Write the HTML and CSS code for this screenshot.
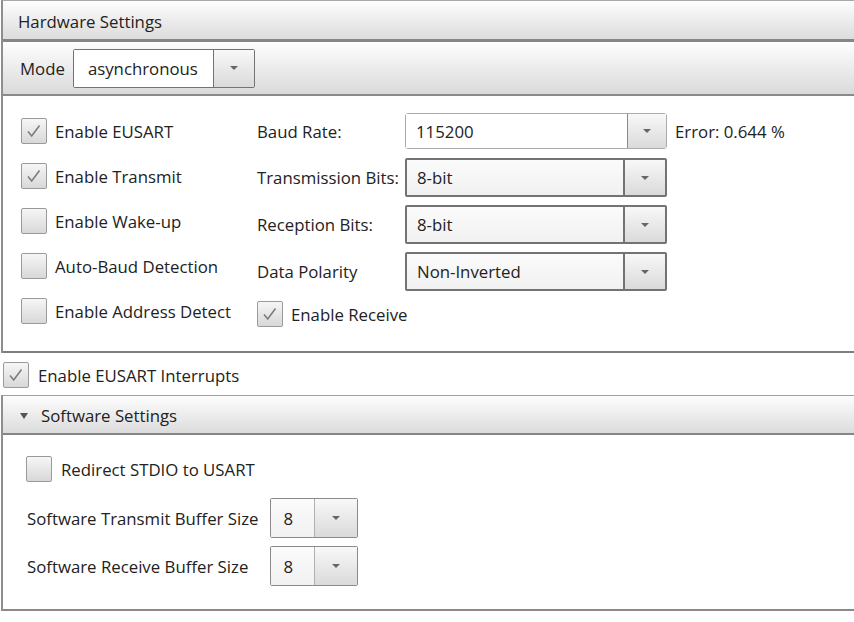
FILE: index.html
```html
<!DOCTYPE html>
<html>
<head>
<meta charset="utf-8">
<link rel="stylesheet" href="styles.css">
</head>
<body>
<section class="panel hw">
  <div class="panel-head">Hardware Settings</div>
  <div class="toolbar">
    <span>Mode</span>
    <div class="combo mode"><span class="val">asynchronous</span><span class="btn"></span></div>
  </div>
  <div class="hw-body">
    <div class="opts">
      <label class="check"><span class="box on"><svg viewBox="0 0 26 26"><polyline points="6.5,13.5 10.5,18.5 19,7"/></svg></span>Enable EUSART</label>
      <label class="check"><span class="box on"><svg viewBox="0 0 26 26"><polyline points="6.5,13.5 10.5,18.5 19,7"/></svg></span>Enable Transmit</label>
      <label class="check"><span class="box"></span>Enable Wake-up</label>
      <label class="check"><span class="box"></span>Auto-Baud Detection</label>
      <label class="check"><span class="box"></span>Enable Address Detect</label>
    </div>
    <div class="fields">
      <span class="lbl">Baud Rate:</span>
      <div class="combo edit"><span class="val">115200</span><span class="btn"></span></div>
      <span class="err">Error: 0.644 %</span>

      <span class="lbl">Transmission Bits:</span>
      <div class="combo sel"><span class="val">8-bit</span><span class="btn"></span></div>
      <span></span>

      <span class="lbl">Reception Bits:</span>
      <div class="combo sel"><span class="val">8-bit</span><span class="btn"></span></div>
      <span></span>

      <span class="lbl">Data Polarity</span>
      <div class="combo sel"><span class="val">Non-Inverted</span><span class="btn"></span></div>
      <span></span>

      <label class="check recv"><span class="box on"><svg viewBox="0 0 26 26"><polyline points="6.5,13.5 10.5,18.5 19,7"/></svg></span>Enable Receive</label>
    </div>
  </div>
</section>

<label class="check interrupts"><span class="box on"><svg viewBox="0 0 26 26"><polyline points="6.5,13.5 10.5,18.5 19,7"/></svg></span>Enable EUSART Interrupts</label>

<section class="panel sw">
  <div class="panel-head sw-head"><span class="tri"></span>Software Settings</div>
  <div class="sw-body">
    <label class="check redirect"><span class="box"></span>Redirect STDIO to USART</label>
    <div class="buffers">
      <span>Software Transmit Buffer Size</span>
      <div class="combo small"><span class="val">8</span><span class="btn"></span></div>
      <span>Software Receive Buffer Size</span>
      <div class="combo small"><span class="val">8</span><span class="btn"></span></div>
    </div>
  </div>
</section>
</body>
</html>
```
FILE: styles.css
```css
html, body {
  margin: 0;
  overflow: hidden;
  background: #ffffff;
}
body {
  width: 854px;
  height: 622px;
  box-sizing: border-box;
  padding-left: 1px;
  font-family: "Open Sans", "Noto Sans", sans-serif;
  font-size: 16.8px;
  color: #222222;
}

.panel {
  border-left: 2px solid #8e8e8e;
}
.hw {
  border-top: 1px solid #a8a8a8;
}
.panel-head {
  box-sizing: border-box;
  display: flex;
  align-items: center;
  padding-left: 15px;
  padding-top: 2px;
  background: linear-gradient(#fdfdfd, #dcdcdc);
  border-bottom: 3px solid #868686;
  height: 41px;
}
.toolbar {
  height: 54px;
  box-sizing: border-box;
  display: flex;
  align-items: center;
  gap: 8px;
  padding-left: 17px;
  background: linear-gradient(#fefefe, #dadada);
  border-bottom: 2px solid #8a8a8a;
}

.hw-body {
  display: flex;
  align-items: flex-start;
  padding: 12px 0 18px 18px;
  border-bottom: 2px solid #7e7e7e;
}
.opts {
  width: 236px;
  flex: none;
  display: flex;
  flex-direction: column;
  gap: 19px;
  padding-top: 10px;
}
.fields {
  display: grid;
  grid-template-columns: 148px 262px auto;
  grid-template-rows: 46px 47px 47px 47px 38px;
  align-items: center;
}
.err {
  margin-left: 8px;
}
.recv {
  grid-column: 1 / 3;
}

.check {
  display: flex;
  align-items: center;
  gap: 8px;
}
.box {
  width: 26px;
  height: 26px;
  box-sizing: border-box;
  border: 1px solid #9a9a9a;
  border-radius: 2px;
  background: linear-gradient(#f6f6f6, #d8d8d8);
  flex: none;
}
.box svg {
  display: block;
  width: 24px;
  height: 24px;
}
.box polyline {
  fill: none;
  stroke: #7c7c7c;
  stroke-width: 1.7;
}

.combo {
  display: flex;
  box-sizing: border-box;
  height: 39px;
  border: 1px solid #737373;
  border-radius: 2px;
}
.combo .val {
  flex: 1;
  display: flex;
  align-items: center;
  padding-left: 10px;
  background: linear-gradient(#fbfbfb, #f1f1f1);
}
.combo .btn {
  width: 40px;
  flex: none;
  display: flex;
  align-items: center;
  justify-content: center;
  border-left: 1px solid #737373;
  background: linear-gradient(#f8f8f8, #dadada);
}
.combo .btn::after {
  content: "";
  border-left: 4px solid transparent;
  border-right: 4px solid transparent;
  border-top: 4px solid #666666;
}
.combo.mode {
  width: 182px;
}
.combo.mode .val {
  background: #ffffff;
  padding-left: 14px;
}
.combo.edit {
  height: 36px;
  border-color: #ababab;
  border-radius: 3px;
}
.combo.edit .val {
  background: #ffffff;
}
.combo.edit .btn {
  width: 38px;
  border-left-color: #8a8a8a;
}
.combo.sel {
  border-width: 2px;
}
.combo.sel .btn {
  border-left-width: 2px;
}
.combo.small {
  width: 88px;
  height: 40px;
  border-color: #8a8a8a;
}
.combo.small .val {
  padding-left: 13px;
}
.combo.small .btn {
  width: 42px;
  border-left-color: #b0b0b0;
}

.interrupts {
  margin: 9px 0 7px 2px;
  gap: 9px;
}

.sw {
  border-top: 1px solid #a0a0a0;
}
.sw-head {
  height: 39px;
  border-bottom-width: 2px;
  padding-left: 17px;
  gap: 13px;
}
.tri {
  width: 0;
  height: 0;
  border-left: 4px solid transparent;
  border-right: 4px solid transparent;
  border-top: 6px solid #555555;
}
.sw-body {
  padding: 21px 0 23px 23px;
  border-bottom: 2px solid #8a8a8a;
}
.redirect {
  gap: 9px;
}
.buffers {
  display: grid;
  grid-template-columns: auto auto;
  justify-content: start;
  align-items: center;
  column-gap: 11px;
  row-gap: 8px;
  margin: 16px 0 0 1px;
}
```
